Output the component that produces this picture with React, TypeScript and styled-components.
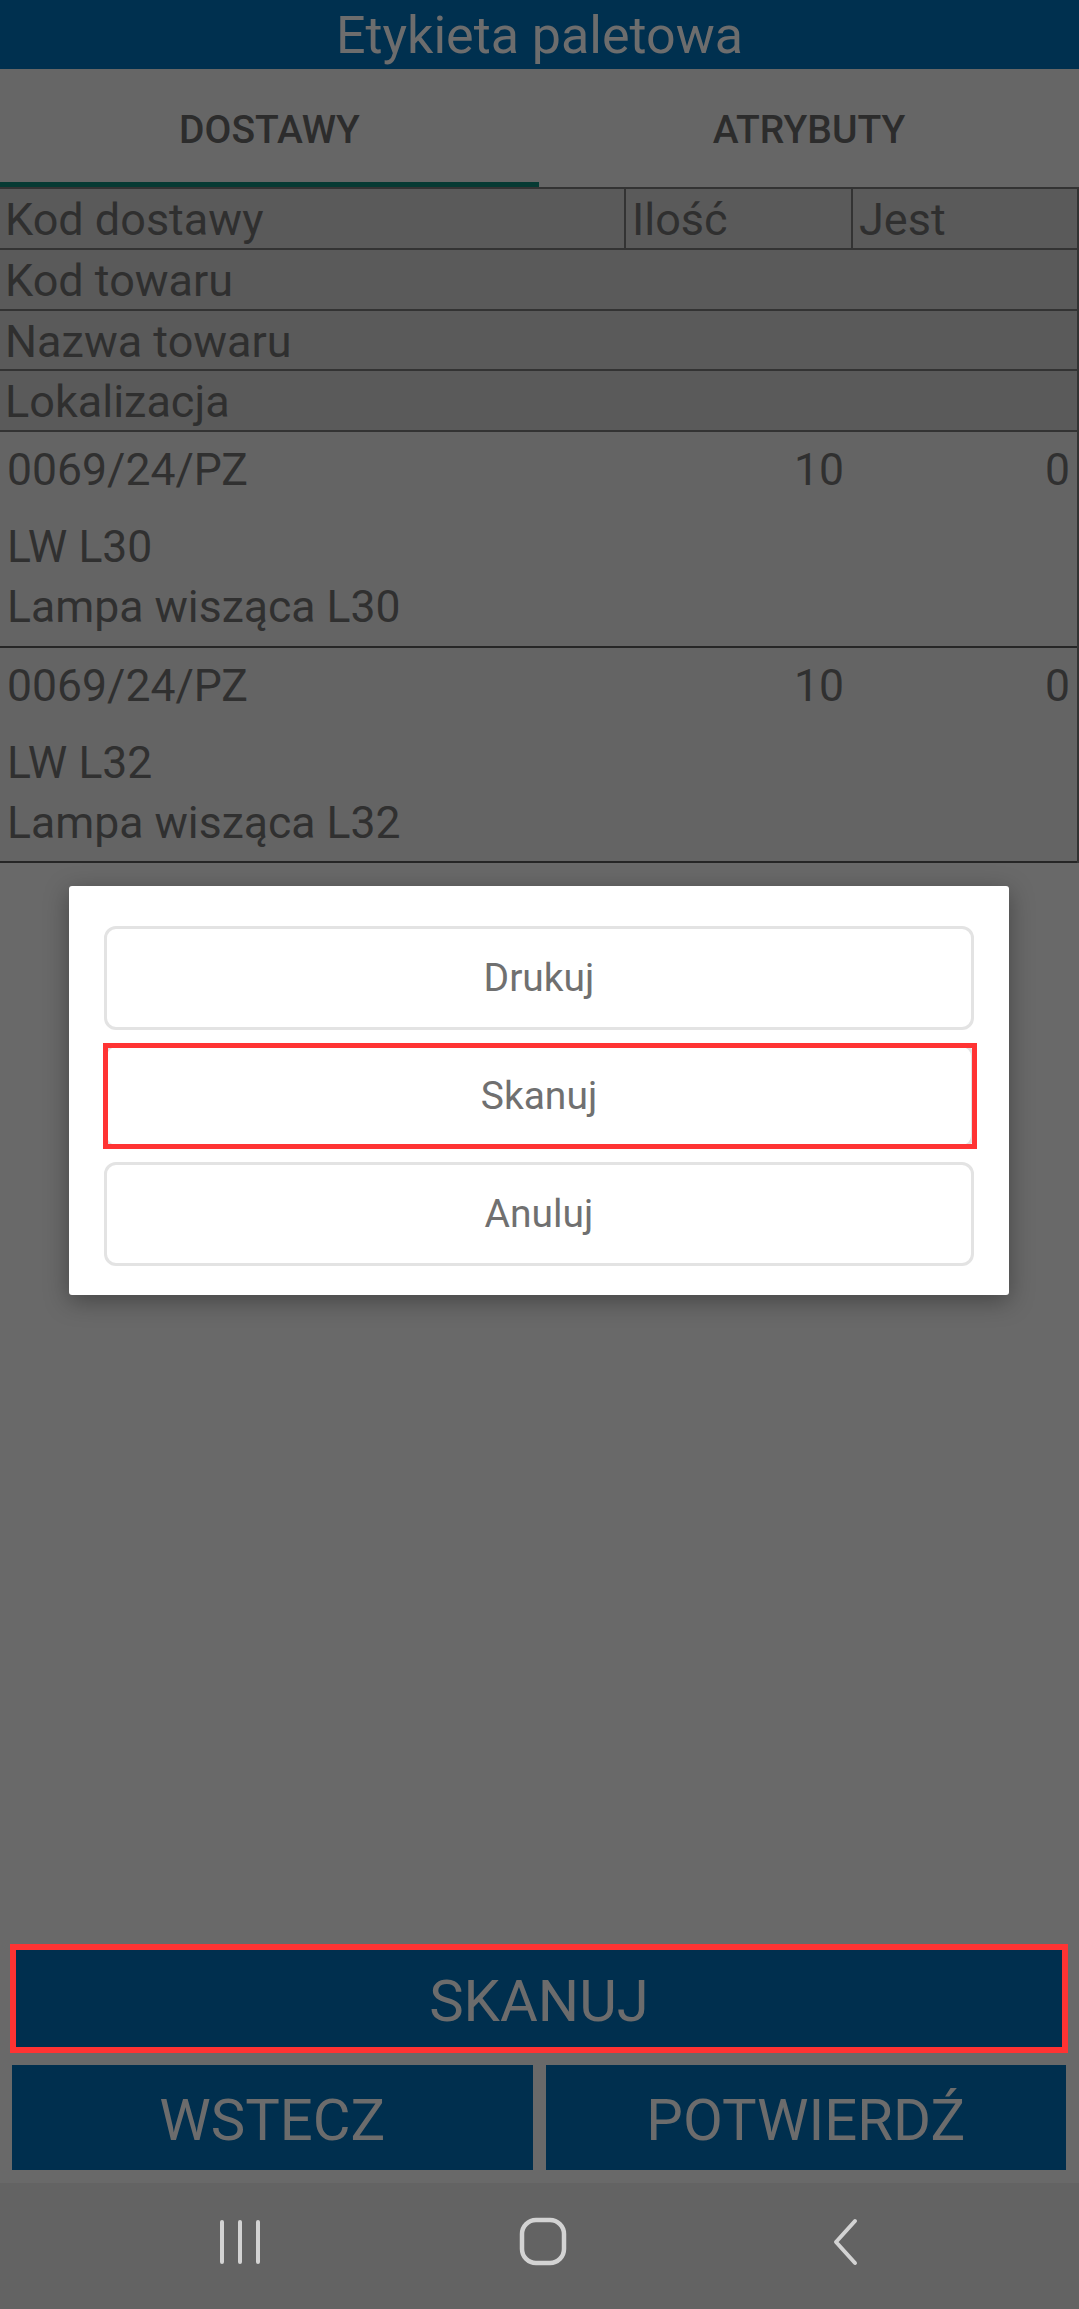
import React from "react";
import styled, { createGlobalStyle, css } from "styled-components";

const Global = createGlobalStyle`
  html, body { margin: 0; padding: 0; }
  body { font-family: Roboto, "Noto Sans", "Liberation Sans", sans-serif; background: #696969; }
  * { box-sizing: border-box; }
`;

const Screen = styled.div`
  position: relative;
  width: 1079px;
  height: 2309px;
  display: flex;
  flex-direction: column;
  background: #696969;
  overflow: hidden;
`;

const TitleBar = styled.header`
  height: 69px;
  background: #00304f;
  display: flex;
  align-items: center;
  justify-content: center;
  padding-top: 3px;
  color: #6d6d6d;
  font-size: 52px;
  line-height: 1;
`;

const Tabs = styled.nav`
  display: grid;
  grid-template-columns: 539px 1fr;
  height: 118px;
  background: #666666;
`;

const Tab = styled.div<{ $active?: boolean }>`
  display: flex;
  align-items: center;
  justify-content: center;
  padding-top: 9px;
  font-size: 39px;
  font-weight: 500;
  color: #2c2c2c;
  border-bottom: 5px solid ${(p) => (p.$active ? "#063a33" : "transparent")};
`;

const Table = styled.section`
  border-top: 2px solid #333333;
  border-right: 2px solid #333333;
`;

const HeadRow = styled.div<{ $cols?: boolean }>`
  height: 60.8px;
  background: #5a5a5a;
  border-bottom: 2px solid #333333;
  font-size: 45px;
  line-height: 53px;
  color: #2f2f2f;
  ${(p) =>
    p.$cols &&
    css`
      display: grid;
      grid-template-columns: 624px 227px 1fr;
    `}
`;

const HeadCell = styled.div<{ $divider?: boolean }>`
  padding: 4px 0 2px ${(p) => (p.$divider ? "6px" : "5px")};
  ${(p) => p.$divider && css`border-left: 2px solid #333333;`}
  white-space: nowrap;
`;

const ItemRow = styled.div`
  height: 215.5px;
  background: #646464;
  border-bottom: 2px solid #262626;
  padding: 12px 0 0;
  font-size: 44.5px;
  line-height: 53px;
  color: #303030;
`;

const ItemTop = styled.div`
  display: grid;
  grid-template-columns: 624px 227px 1fr;
  margin-bottom: 24px;
`;

const ItemCell = styled.div<{ $num?: boolean }>`
  padding: ${(p) => (p.$num ? "0 7px 0 0" : "0 0 0 7px")};
  text-align: ${(p) => (p.$num ? "right" : "left")};
  white-space: nowrap;
`;

const ItemLine = styled.div<{ $gap?: number }>`
  padding-left: 7px;
  margin-bottom: ${(p) => p.$gap ?? 0}px;
  white-space: nowrap;
`;

const Spacer = styled.div`
  flex: 1;
`;

const Actions = styled.div`
  display: flex;
  flex-direction: column;
  gap: 14px;
  padding: 0 13px 13px 12px;
`;

const ActionRow = styled.div`
  display: grid;
  grid-template-columns: 1fr 1fr;
  gap: 13px;
`;

const ActionButton = styled.button<{ $focused?: boolean }>`
  height: 105px;
  border: none;
  border-radius: 0;
  background: #002f4e;
  color: #6c6c6c;
  font-family: Roboto, "Noto Sans", "Liberation Sans", sans-serif;
  font-size: 58px;
  padding: 4px 0 0;
  display: flex;
  align-items: center;
  justify-content: center;
  ${(p) =>
    p.$focused &&
    css`
      outline: 6px solid #ff3333;
      outline-offset: -4px;
    `}
`;

const NavBar = styled.div`
  height: 126px;
  background: #636363;
  display: grid;
  grid-template-columns: repeat(3, 303px);
  justify-content: center;
  align-items: center;
  padding: 0 0 8px 6px;
`;

const NavSlot = styled.div`
  display: flex;
  justify-content: center;
  align-items: center;
`;

const Dialog = styled.div`
  position: absolute;
  top: 886px;
  left: 69px;
  width: 940px;
  background: #ffffff;
  border-radius: 3px;
  box-shadow: 0 6px 24px rgba(0, 0, 0, 0.35);
  padding: 40px 35px 29px;
  display: flex;
  flex-direction: column;
  gap: 14px;
`;

const DialogButton = styled.button<{ $focused?: boolean }>`
  position: relative;
  height: 104px;
  background: #ffffff;
  border: 3px solid #e3e3e3;
  border-radius: 12px;
  color: #707070;
  font-family: Roboto, "Noto Sans", "Liberation Sans", sans-serif;
  font-size: 39px;
  display: flex;
  align-items: center;
  justify-content: center;
  ${(p) =>
    p.$focused &&
    css`
      &::after {
        content: "";
        position: absolute;
        inset: -4px -6px -4px -4px;
        border: 5px solid #ff3333;
        pointer-events: none;
      }
    `}
`;

const items = [
  { code: "0069/24/PZ", qty: "10", jest: "0", sku: "LW L30", name: "Lampa wisząca L30" },
  { code: "0069/24/PZ", qty: "10", jest: "0", sku: "LW L32", name: "Lampa wisząca L32" },
];

const iconColor = "#d3d3d3";

export default function App() {
  return (
    <Screen>
      <Global />
      <TitleBar>Etykieta paletowa</TitleBar>
      <Tabs>
        <Tab $active>DOSTAWY</Tab>
        <Tab>ATRYBUTY</Tab>
      </Tabs>
      <Table>
        <HeadRow $cols>
          <HeadCell>Kod dostawy</HeadCell>
          <HeadCell $divider>Ilość</HeadCell>
          <HeadCell $divider>Jest</HeadCell>
        </HeadRow>
        <HeadRow>
          <HeadCell>Kod towaru</HeadCell>
        </HeadRow>
        <HeadRow>
          <HeadCell>Nazwa towaru</HeadCell>
        </HeadRow>
        <HeadRow>
          <HeadCell>Lokalizacja</HeadCell>
        </HeadRow>
        {items.map((it) => (
          <ItemRow key={it.sku}>
            <ItemTop>
              <ItemCell>{it.code}</ItemCell>
              <ItemCell $num>{it.qty}</ItemCell>
              <ItemCell $num>{it.jest}</ItemCell>
            </ItemTop>
            <ItemLine $gap={7}>{it.sku}</ItemLine>
            <ItemLine>{it.name}</ItemLine>
          </ItemRow>
        ))}
      </Table>
      <Spacer />
      <Actions>
        <ActionButton $focused>SKANUJ</ActionButton>
        <ActionRow>
          <ActionButton>WSTECZ</ActionButton>
          <ActionButton>POTWIERDŹ</ActionButton>
        </ActionRow>
      </Actions>
      <NavBar>
        <NavSlot>
          <svg width="46" height="50" viewBox="0 0 46 50">
            <g stroke={iconColor} strokeWidth="4" strokeLinecap="round">
              <line x1="5" y1="5" x2="5" y2="45" />
              <line x1="23" y1="5" x2="23" y2="45" />
              <line x1="41" y1="5" x2="41" y2="45" />
            </g>
          </svg>
        </NavSlot>
        <NavSlot>
          <svg width="50" height="50" viewBox="0 0 50 50">
            <rect x="4" y="3" width="42" height="43" rx="14" fill="none" stroke={iconColor} strokeWidth="4.5" />
          </svg>
        </NavSlot>
        <NavSlot>
          <svg width="30" height="50" viewBox="0 0 30 50">
            <polyline points="24,4 5,25 24,46" fill="none" stroke={iconColor} strokeWidth="4" strokeLinecap="round" strokeLinejoin="round" />
          </svg>
        </NavSlot>
      </NavBar>
      <Dialog>
        <DialogButton>Drukuj</DialogButton>
        <DialogButton $focused>Skanuj</DialogButton>
        <DialogButton>Anuluj</DialogButton>
      </Dialog>
    </Screen>
  );
}
